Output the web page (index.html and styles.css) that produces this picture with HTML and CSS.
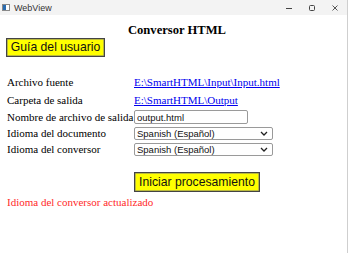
FILE: index.html
```html
<!DOCTYPE html>
<html lang="es">
<head>
    <meta charset="UTF-8">
    <title>WebView</title>
    <link rel="stylesheet" href="styles.css">
</head>
<body>
    <div class="window">
        <div class="titlebar">
            <svg class="app-icon" width="8" height="7" viewBox="0 0 8 7">
                <rect x="0.5" y="0.5" width="7" height="6" fill="#fff" stroke="#8a8a8a"/>
                <rect x="1" y="1" width="3" height="5" fill="#2b6cb0"/>
            </svg>
            <span class="title">WebView</span>
            <div class="controls">
                <svg width="8" height="8" viewBox="0 0 8 8"><path d="M1 4.5h6" stroke="#444" stroke-width="1"/></svg>
                <svg width="8" height="8" viewBox="0 0 8 8"><rect x="1.5" y="1.5" width="5" height="5" rx="1" fill="none" stroke="#444"/></svg>
                <svg width="8" height="8" viewBox="0 0 8 8"><path d="M1.5 1.5l5 5M6.5 1.5l-5 5" stroke="#444" stroke-width="0.9"/></svg>
            </div>
        </div>

        <div class="content">
            <h1>Conversor HTML</h1>
            <button class="yellow-button guide">Guía del usuario</button>

            <div class="form">
                <div class="row tall">
                    <span class="label">Archivo fuente</span>
                    <a href="#">E:\SmartHTML\Input\Input.html</a>
                </div>
                <div class="row tall">
                    <span class="label">Carpeta de salida</span>
                    <a href="#">E:\SmartHTML\Output</a>
                </div>
                <div class="row">
                    <span class="label">Nombre de archivo de salida</span>
                    <input type="text" value="output.html">
                </div>
                <div class="row">
                    <span class="label">Idioma del documento</span>
                    <div class="select-box">
                        <select><option>Spanish (Español)</option></select>
                        <svg class="chevron" width="8" height="5" viewBox="0 0 8 5"><path d="M1 1l3 3 3-3" fill="none" stroke="#222" stroke-width="1.3"/></svg>
                    </div>
                </div>
                <div class="row">
                    <span class="label">Idioma del conversor</span>
                    <div class="select-box">
                        <select><option>Spanish (Español)</option></select>
                        <svg class="chevron" width="8" height="5" viewBox="0 0 8 5"><path d="M1 1l3 3 3-3" fill="none" stroke="#222" stroke-width="1.3"/></svg>
                    </div>
                </div>
            </div>

            <div class="actions">
                <button class="yellow-button start">Iniciar procesamiento</button>
            </div>
            <p class="status">Idioma del conversor actualizado</p>
        </div>
    </div>
</body>
</html>
```

FILE: styles.css
```css
body {
    margin: 0;
    background: #fff;
    font-family: 'Liberation Serif', serif;
    overflow: hidden;
}
.window {
    width: 347px;
    height: 253px;
    border-right: 1px solid #cfcfcf;
    background: #fff;
}
.titlebar {
    height: 15px;
    background: #f3f3f3;
    display: flex;
    align-items: center;
    padding-left: 2px;
}
.app-icon {
    margin-right: 4px;
}
.title {
    font-family: 'Liberation Sans', sans-serif;
    font-size: 9px;
    color: #333;
}
.controls {
    margin-left: auto;
    display: flex;
    gap: 15px;
    padding-right: 8px;
}
.content {
    padding-left: 7px;
}
h1 {
    margin: 0;
    padding-top: 8px;
    height: 15px;
    text-align: center;
    font-size: 12.6px;
    line-height: 15px;
    font-weight: bold;
}
.yellow-button {
    display: block;
    background: #ffff00;
    border: 1px solid #444;
    box-shadow: inset 0 0 0 0.5px #777;
    font-family: 'Liberation Sans', sans-serif;
    font-size: 12.2px;
    color: #111;
    padding: 0;
    height: 19px;
    line-height: 17px;
    white-space: nowrap;
    text-align: center;
    cursor: pointer;
}
.guide {
    margin-left: -1px;
    width: 99px;
}
.form {
    margin-top: 16px;
    font-size: 11px;
}
.row {
    display: flex;
    align-items: center;
    height: 16px;
}
.row.tall {
    height: 18px;
}
.label {
    width: 127px;
    white-space: nowrap;
}
a {
    color: #0000ee;
}
input {
    width: 114px;
    height: 14px;
    box-sizing: border-box;
    border: 1px solid #9a9a9a;
    border-radius: 2px;
    padding: 0 2px;
    font-family: 'Liberation Sans', sans-serif;
    font-size: 9.5px;
    color: #111;
}
.select-box {
    position: relative;
    width: 139px;
    height: 13px;
}
select {
    appearance: none;
    width: 100%;
    height: 13px;
    box-sizing: border-box;
    border: 1px solid #9a9a9a;
    border-radius: 2px;
    padding: 0 2px;
    background: #fff;
    font-family: 'Liberation Sans', sans-serif;
    font-size: 9.5px;
    line-height: 11px;
    color: #111;
}
.chevron {
    position: absolute;
    right: 5px;
    top: 4px;
}
.actions {
    margin-top: 15px;
    padding-left: 127px;
}
.start {
    height: 20px;
    width: 126px;
    line-height: 18px;
}
.status {
    margin: 3px 0 0;
    color: #ff2a2a;
    font-size: 11px;
    line-height: 14px;
}
```
